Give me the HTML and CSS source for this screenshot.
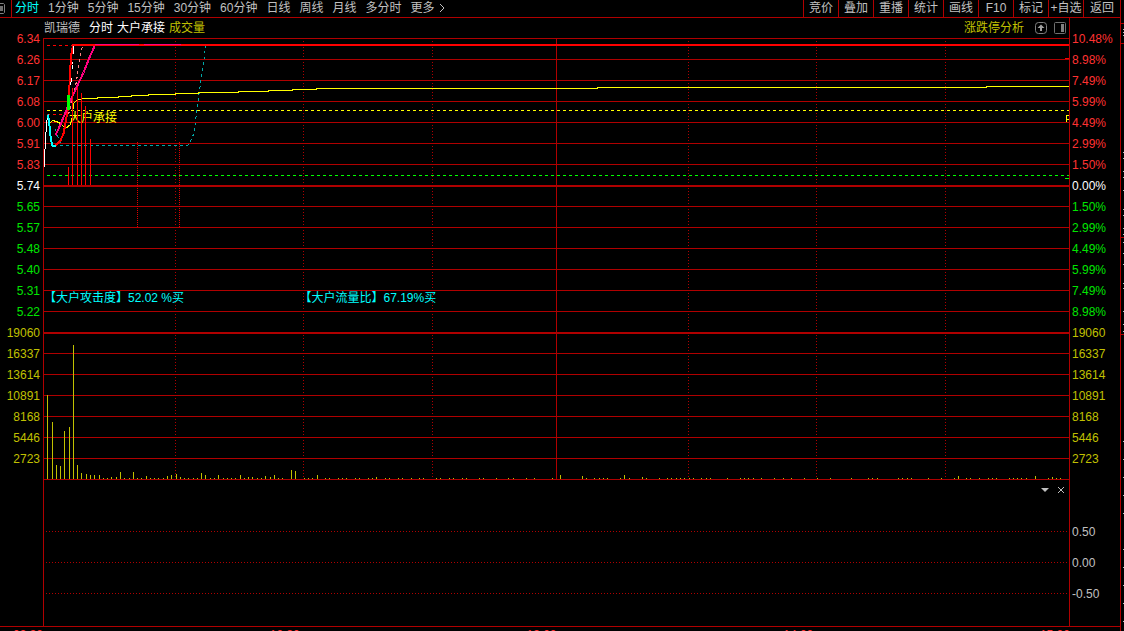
FILE: index.html
```html
<!DOCTYPE html>
<html lang="zh-CN">
<head>
    <meta charset="UTF-8">
    <meta name="viewport" content="width=device-width, initial-scale=1.0">
    <title>凯瑞德 分时</title>
    <link rel="stylesheet" href="styles.css">
</head>
<body>
    <main class="terminal">
        <nav class="toolbar">
            <button class="layout-btn" aria-label="布局">
                <svg width="6" height="12" viewBox="0 0 6 12"><path d="M0 .5h3.500l1 1v8l-1 1H0" fill="none" stroke="#808080"/><path d="M0 3h3v5H0z" fill="#707070"/></svg>
            </button>
            <div class="periods">
                <button class="active">分时</button>
                <button>1分钟</button>
                <button>5分钟</button>
                <button>15分钟</button>
                <button>30分钟</button>
                <button>60分钟</button>
                <button>日线</button>
                <button>周线</button>
                <button>月线</button>
                <button>多分时</button>
                <button class="more">更多
                    <svg width="6" height="10" viewBox="0 0 6 10"><path d="M1 1l4 4-4 4" fill="none" stroke="#c0c0c0"/></svg>
                </button>
            </div>
            <div class="tools">
                <button>竞价</button>
                <button>叠加</button>
                <button>重播</button>
                <button>统计</button>
                <button>画线</button>
                <button>F10</button>
                <button>标记</button>
                <button>+自选</button>
                <button>返回</button>
            </div>
        </nav>

        <div class="workspace">
            <div class="axis axis-left">
                <span class="up">6.34</span>
                <span class="up">6.26</span>
                <span class="up">6.17</span>
                <span class="up">6.08</span>
                <span class="up">6.00</span>
                <span class="up">5.91</span>
                <span class="up">5.83</span>
                <span class="flat">5.74</span>
                <span class="down">5.65</span>
                <span class="down">5.57</span>
                <span class="down">5.48</span>
                <span class="down">5.40</span>
                <span class="down">5.31</span>
                <span class="down">5.22</span>
                <span class="vol">19060</span>
                <span class="vol">16337</span>
                <span class="vol">13614</span>
                <span class="vol">10891</span>
                <span class="vol">8168</span>
                <span class="vol">5446</span>
                <span class="vol">2723</span>
            </div>

            <div class="charts">
                <header class="title-row">
                    <span class="stock">凯瑞德</span>
                    <span class="legend">分时</span>
                    <span class="legend">大户承接</span>
                    <span class="legend-vol">成交量</span>
                    <a class="analysis" href="#">涨跌停分析</a>
                    <button class="icon-btn" aria-label="上移">
                        <svg width="12" height="12" viewBox="0 0 12 12"><rect x=".5" y=".5" width="11" height="11" rx="3" fill="none" stroke="#808080"/><path d="M6 2.500L9.500 6H7v3H5V6H2.500z" fill="#a0a0a0"/></svg>
                    </button>
                    <button class="icon-btn" aria-label="侧栏">
                        <svg width="12" height="12" viewBox="0 0 12 12"><rect x=".5" y=".5" width="11" height="11" rx="1" fill="none" stroke="#707070"/><path d="M7 2h3v8H7z" fill="#808080"/></svg>
                    </button>
                </header>

                <section class="price-panel">
                    <!-- viewBox is shifted half a unit so whole coordinates fall on pixel centres -->
                    <svg class="plot" viewBox="43.5 37.5 1025 442" preserveAspectRatio="none">
                        <path class="grid" d="M43 38H1069M43 59H1069M43 80H1069M43 101H1069M43 122H1069M43 143H1069M43 164H1069M43 206H1069M43 227H1069M43 248H1069M43 269H1069M43 290H1069M43 311H1069M43 353H1069M43 374H1069M43 395H1069M43 416H1069M43 437H1069M43 458H1069M43 479H1069M556 38V479"/>
                        <path class="grid thick" d="M43 185.500H1069M43 332.500H1069"/>
                        <path class="grid dots" d="M175 40.500V479M303 40.500V479M432 40.500V479M688 40.500V479M816 40.500V479M945 40.500V479"/>

                        <!-- reference levels -->
                        <path class="dash" stroke="#ffff00" d="M46.500 110H1069"/>
                        <path class="dash" stroke="#00ff00" d="M46.500 175H1069"/>
                        <path class="dash" stroke="#ff0000" d="M46.500 45H73M46.500 114H69"/>
                        <path class="dash" stroke="#00a8a8" d="M59.500 145H187L189 143L193 134L195 122L196 112L198 97L200 83L202 70L204 56L205 46"/>
                        <path class="dash" stroke="#00a8a8" d="M55 129L57 135L60 143"/>
                        <path class="fine-dots" d="M137 141.500V227M179 141.500V227"/>

                        <!-- price, average and big-order lines -->
                        <path class="line" stroke="#ffffff" d="M43 175L44 158L45 140L46 124L47 115"/>
                        <path class="line" stroke="#ffff00" d="M48 124L52 120L56 121L60 123L65 128L70 124L72 115L73 103L76 100L83 98H97V97H118V96H131V95H148V94H175V93H198V92H238V91H268V90H292V89H316V88H597V87H986V86H1069"/>
                        <path class="line wide" stroke="#00ffff" d="M47.500 114L48.500 120L49.500 131L50.500 140L52 145H55"/>
                        <path class="line wide" stroke="#ff0000" d="M55 145L60 140L63 133L65 123L68 105L69 85L70 65L71 53L72.500 44.500H1069"/>
                        <path class="line white-dash" d="M73 46L72 64L70 88"/>
                        <path class="dash" stroke="#ff8080" d="M68 114L75 86L78 68L80 52L82 46"/>
                        <path class="line wide" stroke="#ff0080" d="M55 135L60 124L65 112L70 100L77 85L83 72L89 57L94 46"/>
                        <path class="line" stroke="#ff0080" d="M94 44H138M143 44H180"/>
                        <path class="line" stroke="#00ff00" stroke-width="3" d="M68 94V109"/>
                        <path class="line" stroke="#ff0000" d="M1064.500 58H1069"/>
                        <path class="line" stroke="#00ff00" d="M1064.500 178H1069"/>
                        <path class="line" stroke="#ffff00" d="M1069 115H1066V121M1066 119H1069"/>

                        <path class="volume" d="M47 479V395M52 479V422M56 479V465M60 479V466M64 479V431M69 479V427M73 479V345M77 479V465M81 479V473M86 479V474M90 479V475M94 479V475M99 479V475M103 479v-1M107 479v-1M111 479v-2M116 479v-2M120 479v-7M124 479v-1M129 479v-1M133 479v-7M137 479v-1M141 479v-1M146 479v-3M150 479v-1M154 479v-1M158 479v-1M163 479v-1M167 479v-3M171 479v-4M176 479v-5M180 479v-2M184 479v-1M188 479v-1M193 479v-1M197 479v-1M201 479v-6M205 479v-4M210 479v-1M214 479v-1M218 479v-4M223 479v-1M227 479v-1M231 479v-1M235 479v-1M240 479v-4M244 479v-1M248 479v-2M252 479v-2M257 479v-1M261 479v-1M265 479v-3M270 479v-2M274 479v-4M278 479v-1M282 479v-1M291 479v-9M295 479v-8M304 479v-1M308 479v-1M312 479v-1M317 479v-4M325 479v-1M329 479v-1M338 479v-1M342 479v-1M346 479v-1M355 479v-1M359 479v-1M368 479v-1M372 479v-1M376 479v-2M385 479v-1M389 479v-1M398 479v-1M402 479v-1M411 479v-1M419 479v-1M423 479v-1M436 479v-1M440 479v-1M449 479v-1M453 479v-1M462 479v-1M466 479v-1M479 479v-1M483 479v-1M496 479v-1M508 479v-1M513 479v-1M526 479v-1M534 479v-1M552 479v-1M560 479v-4M582 479v-3M586 479v-1M594 479v-1M599 479v-1M603 479v-1M607 479v-1M620 479v-1M624 479v-4M629 479v-1M642 479v-2M646 479v-1M659 479v-1M667 479v-1M671 479v-1M676 479v-1M680 479v-1M684 479v-1M689 479v-1M693 479v-1M701 479v-1M706 479v-1M710 479v-1M727 479v-1M740 479v-1M744 479v-1M748 479v-1M753 479v-1M761 479v-1M774 479v-1M783 479v-1M791 479v-1M804 479v-1M817 479v-1M830 479v-1M851 479v-1M868 479v-1M872 479v-1M877 479v-1M898 479v-1M902 479v-1M907 479v-1M911 479v-1M928 479v-1M941 479v-1M954 479v-1M958 479v-3M966 479v-1M970 479v-1M979 479v-1M988 479v-1M992 479v-1M996 479v-1M1009 479v-1M1013 479v-1M1017 479v-1M1021 479v-1M1026 479v-1M1035 479v-3M1048 479v-1M1052 479v-2M1056 479v-1M1060 479v-1"/>
                    </svg>
                    <span class="marker">大户承接</span>
                    <svg class="plot spikes" viewBox="43.5 37.5 1025 442" preserveAspectRatio="none">
                        <path class="line" stroke="#ff0000" d="M68 166V184M72 87V184M77 86V184M81 92V184M85 105V184M90 138V184"/>
                    </svg>
                    <span class="note attack">【大户攻击度】52.02 %买</span>
                    <span class="note flow">【大户流量比】67.19%买</span>
                </section>

                <section class="sub-panel">
                    <div class="sub-controls">
                        <button class="icon-btn" aria-label="展开">
                            <svg width="8" height="8" viewBox="0 0 8 8"><path d="M0 2h8L4 6z" fill="#c0c0c0"/></svg>
                        </button>
                        <button class="icon-btn" aria-label="关闭">
                            <svg width="8" height="8" viewBox="0 0 8 8"><path d="M1 1l6 6M7 1L1 7" fill="none" stroke="#c0c0c0"/></svg>
                        </button>
                    </div>
                    <svg class="sub-plot" viewBox="43.5 499.5 1025 126" preserveAspectRatio="none">
                        <path class="grid dots" d="M45.500 531H1069M45.500 562H1069M45.500 593H1069"/>
                    </svg>
                </section>
            </div>

            <div class="axis axis-right">
                <span class="up">10.48%</span>
                <span class="up">8.98%</span>
                <span class="up">7.49%</span>
                <span class="up">5.99%</span>
                <span class="up">4.49%</span>
                <span class="up">2.99%</span>
                <span class="up">1.50%</span>
                <span class="flat">0.00%</span>
                <span class="down">1.50%</span>
                <span class="down">2.99%</span>
                <span class="down">4.49%</span>
                <span class="down">5.99%</span>
                <span class="down">7.49%</span>
                <span class="down">8.98%</span>
                <span class="vol">19060</span>
                <span class="vol">16337</span>
                <span class="vol">13614</span>
                <span class="vol">10891</span>
                <span class="vol">8168</span>
                <span class="vol">5446</span>
                <span class="vol">2723</span>
                <div class="sub-scale">
                    <span>0.50</span>
                    <span>0.00</span>
                    <span>-0.50</span>
                </div>
            </div>
        </div>

        <footer class="times">
            <span>09:30</span>
            <span>10:30</span>
            <span>13:00</span>
            <span>14:00</span>
            <span>15:00</span>
        </footer>
    </main>

    <!-- edge of the quote panel -->
    <aside class="quote-edge">
        <svg width="3" height="631" viewBox="0 0 3 631" shape-rendering="crispEdges">
            <path d="M0 23.500h3M0 43.500h3M0 237.500h3M0 334.500h3" stroke="#b00000"/>
            <path d="M2.500 29v1M2.500 32v1M2.500 35v1M2.500 152v1M2.500 158v1M2.500 171v1M2.500 177v1M2.500 190v1M2.500 209v1M2.500 215v1M2.500 228v1M2.500 234v1M2.500 242v1M2.500 253v1M2.500 264v1M2.500 283v1M2.500 288v1M2.500 311v1M2.500 324v1M2.500 331v1M2.500 441v1M2.500 459v1M2.500 477v1M2.500 495v1M2.500 513v1M2.500 549v1M2.500 567v1M2.500 585v1M2.500 603v1M2.500 621v1" stroke="#c0c0c0"/>
        </svg>
    </aside>
</body>
</html>
```
FILE: styles.css
```css
* {
    box-sizing: border-box;
}
body {
    display: flex;
    height: 100vh;
    margin: 0;
    overflow: hidden;
    background: #000000;
    color: #c0c0c0;
    font-family: "Liberation Sans", "Noto Sans CJK SC", sans-serif;
    font-size: 12px;
    line-height: 14px;
}
button {
    padding: 0;
    border: 0;
    background: none;
    color: inherit;
    font: inherit;
    white-space: nowrap;
    cursor: pointer;
}
svg {
    display: block;
}
.terminal {
    flex: 1;
    min-width: 0;
    display: flex;
    flex-direction: column;
}

/* toolbar */
.toolbar {
    flex: none;
    display: flex;
    height: 18px;
    border-bottom: 1px solid #b00000;
}
.layout-btn {
    width: 11px;
}
.periods {
    display: flex;
    align-items: center;
    gap: 9px;
    padding: 0 0 2px 3px;
    border-left: 1px solid #b00000;
}
.periods button {
    height: 14px;
}
.periods .active {
    color: #00ffff;
}
.more {
    display: flex;
    align-items: center;
    gap: 4px;
}
.tools {
    display: flex;
    margin-left: auto;
}
.tools button {
    width: 35px;
    padding-bottom: 2px;
    border-left: 1px solid #b00000;
}
.tools button:last-child {
    width: 37px;
}

/* chart area */
.workspace {
    flex: none;
    display: flex;
    border-bottom: 1px solid #b00000;
}
.axis {
    flex: none;
    display: flex;
    flex-direction: column;
    padding-top: 11px;
}
.axis span {
    height: 21px;
    line-height: 21px;
}
.axis-left {
    width: 43px;
    padding-right: 3px;
    text-align: right;
}
.axis-right {
    width: 51px;
    padding-left: 2px;
    border-left: 1px solid #b00000;
}
.up {
    color: #ff3232;
}
.flat {
    color: #ffffff;
}
.down {
    color: #00e600;
}
.vol {
    color: #c0c000;
}
.sub-scale {
    display: flex;
    flex-direction: column;
    gap: 10px;
    padding-top: 52px;
}
.charts {
    flex: 1;
    min-width: 0;
    display: flex;
    flex-direction: column;
}
.title-row {
    display: flex;
    align-items: center;
    gap: 4px;
    height: 20px;
    padding: 0 3px 0 1px;
}
.stock {
    margin-right: 5px;
}
.legend {
    color: #ffffff;
}
.legend-vol {
    color: #c0c000;
}
.analysis {
    margin-left: auto;
    margin-right: 4px;
    color: #c0c000;
    text-decoration: none;
}
.title-row .icon-btn {
    margin-left: 3px;
}
.price-panel {
    position: relative;
    height: 442px;
}
.plot {
    width: 100%;
    height: 442px;
    border-left: 1px solid #b00000;
    shape-rendering: crispEdges;
}
.spikes {
    position: absolute;
    top: 0;
    left: 0;
}
.grid {
    fill: none;
    stroke: #b00000;
}
.thick {
    stroke-width: 2;
}
.dots {
    stroke-dasharray: 1 2;
}
.dash {
    fill: none;
    stroke-dasharray: 3 3;
}
.fine-dots {
    fill: none;
    stroke: #e00000;
    stroke-dasharray: 1 1;
}
.line {
    fill: none;
}
.wide {
    stroke-width: 2;
}
.white-dash {
    stroke: #ffffff;
    stroke-dasharray: 7 9;
}
.volume {
    fill: none;
    stroke: #c0c000;
    transform: translateY(-0.5px);
}
.marker {
    position: absolute;
    top: 73px;
    left: 26px;
    color: #ffff00;
}
.note {
    position: absolute;
    top: 253px;
    color: #00ffff;
    white-space: nowrap;
}
.attack {
    left: 1px;
}
.flow {
    left: 25%;
}

/* empty indicator panel */
.sub-panel {
    height: 146px;
    border-left: 1px solid #b00000;
}
.sub-controls {
    display: flex;
    justify-content: flex-end;
    align-items: center;
    gap: 8px;
    height: 20px;
    padding-right: 4px;
}
.sub-plot {
    width: 100%;
    height: 126px;
    shape-rendering: crispEdges;
}
.times {
    flex: none;
    display: flex;
    justify-content: space-between;
    padding: 1px 50px 0 13px;
    color: #ff3232;
}
.quote-edge {
    flex: none;
    width: 4px;
    border-left: 1px solid #b00000;
}
```
